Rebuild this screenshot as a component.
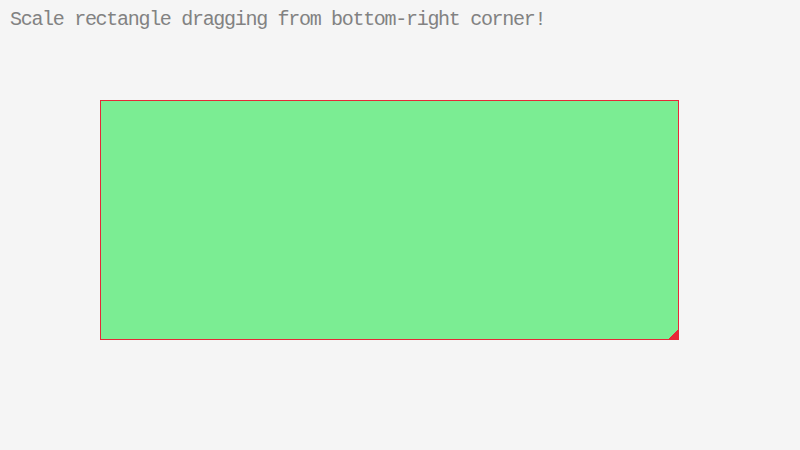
export default function App() {
  return (
    <div className="w-[800px] h-[450px] bg-[#f5f5f5] overflow-hidden">
      {/* Title */}
      <div className="pt-[10px] pl-[10px] h-[30px]">
        <p
          className="text-[20px] leading-[20px] tracking-[-1.3px] text-[#828282] whitespace-nowrap"
          style={{ fontFamily: '"Liberation Mono", "DejaVu Sans Mono", monospace' }}
        >
          Scale rectangle dragging from bottom-right corner!
        </p>
      </div>

      {/* Scalable rectangle */}
      <div className="mt-[70px] ml-[100px] relative w-[579px] h-[240px] bg-[#7bed93] border border-[#e62937]">
        <svg
          className="absolute right-[-1px] bottom-[-1px]"
          width="12"
          height="12"
          viewBox="0 0 12 12"
          shapeRendering="crispEdges"
        >
          <polygon points="0,12 12,12 12,0" fill="#e62937" />
        </svg>
      </div>
    </div>
  );
}
